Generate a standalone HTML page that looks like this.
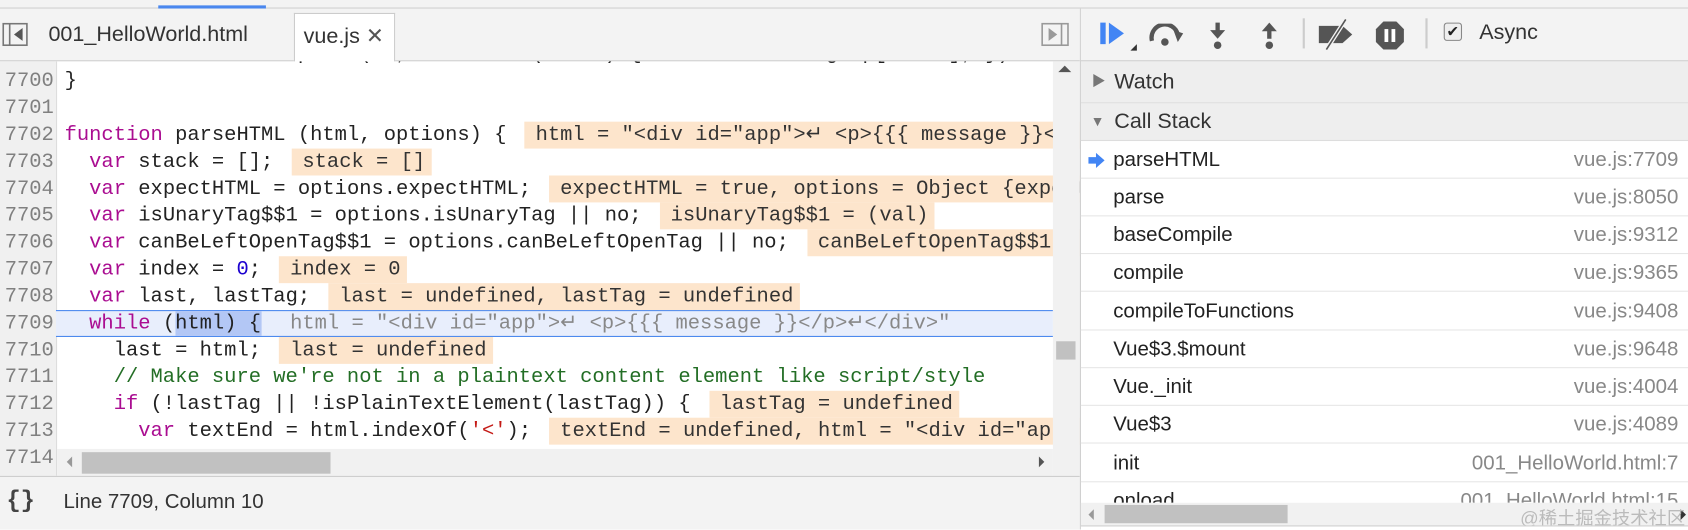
<!DOCTYPE html>
<html><head><meta charset="utf-8"><style>
*{margin:0;padding:0;box-sizing:border-box}
body{width:1688px;height:529px;overflow:hidden;background:#fff;font-family:"Liberation Sans","Noto Sans CJK SC",sans-serif;position:relative}
#wrap{position:absolute;left:0;top:0;width:1568px;height:492px;transform:scale(1.0766);transform-origin:0 0;overflow:hidden}
.abs{position:absolute}
#top{left:0;top:0;width:1568px;height:8px;background:#f3f3f3;border-bottom:1px solid #ccc}
#tabs{left:0;top:8px;width:1003px;height:49px;background:#f3f3f3;border-bottom:1px solid #ccc}
.tab{position:absolute;top:0;height:49px;line-height:48px;font-size:20px;color:#333}
#code{left:0;top:57px;width:1003px;height:385px;overflow:hidden;background:#fff}
#gutter{left:0;top:0;width:53px;height:385px;background:#f0f0f0;border-right:1px solid #ddd}
.ln{position:absolute;left:0;width:50px;text-align:right;font:19px/25px "Liberation Mono",monospace;color:#808080;height:25px}
.cl{position:absolute;left:60px;white-space:pre;font:19px/25px "Liberation Mono",monospace;color:#222;height:25px}
.k{color:#aa0d91}.n{color:#1c00cf}.s{color:#c41a16}.c{color:#236e25}
.v{background:#fde5cc;color:#333;margin-left:17px;padding:0 6px 0 10px;display:inline-block;height:25px}
.g{color:#888;margin-left:17px;padding-left:10px}
#status{left:0;top:442px;width:1003px;height:50px;background:#f3f3f3;border-top:1px solid #ccc}
#right{left:1003px;top:8px;width:565px;height:484px;background:#fff;border-left:1px solid #ccc}
#tb{left:0;top:0;width:565px;height:49px;background:#f3f3f3;border-bottom:1px solid #ccc}
.sec{position:absolute;left:0;width:565px;background:#eee;border-bottom:1px solid #ddd;font-size:20px;color:#333}
.row{position:absolute;left:0;width:565px;height:35px;border-bottom:1px solid #e6e6e6;font-size:19px;line-height:35px;color:#222}
.row .f{position:absolute;left:30px}
.row .r{position:absolute;right:10px;color:#888}
</style></head><body><div id="wrap">
<div id="top" class="abs"></div>
<div class="abs" style="left:147px;top:5px;width:100px;height:3px;background:#4a87ee"></div>
<div id="tabs" class="abs">
  <svg class="abs" style="left:2px;top:13px" width="24" height="22"><rect x="1" y="1" width="22" height="20" fill="none" stroke="#777" stroke-width="1.5"/><line x1="7" y1="1" x2="7" y2="21" stroke="#777" stroke-width="1.5"/><path d="M19 5 L11 11 L19 17Z" fill="#555"/></svg>
  <div class="tab" style="left:45px">001_HelloWorld.html</div>
  <div class="tab" style="left:273px;width:94px;top:4px;height:46px;line-height:42px;background:#fff;border:1px solid #ccc;border-bottom:none;padding-left:8px">vue.js <span style="font-size:20px;color:#555">✕</span></div>
  <svg class="abs" style="left:967px;top:13px" width="26" height="22"><rect x="1" y="1" width="24" height="20" fill="none" stroke="#999" stroke-width="1.5"/><line x1="19" y1="1" x2="19" y2="21" stroke="#999" stroke-width="1.5"/><path d="M7 5 L15 11 L7 17Z" fill="#999"/></svg>
</div>
<div id="code" class="abs">
  <div id="gutter" class="abs"></div>
  <div class="abs" style="left:52px;top:231px;width:926px;height:25px;background:#e8eefc;border-top:1px solid #4a87ee;border-bottom:1px solid #4a87ee"></div>
  <div class="ln" style="top:-19px">7699</div><div class="cl" style="top:-19px">    <span class="k">return</span> value.replace(re, <span class="k">function</span> (match) { <span class="k">return</span> decodingMap[match]; })</div>
  <div class="ln" style="top:6px">7700</div><div class="cl" style="top:6px">}</div>
  <div class="ln" style="top:31px">7701</div>
  <div class="ln" style="top:56px">7702</div><div class="cl" style="top:56px"><span class="k">function</span> parseHTML (html, options) {<span class="v">html = "&lt;div id="app"&gt;↵ &lt;p&gt;{{{ message }}&lt;/p&gt;</span></div>
  <div class="ln" style="top:81px">7703</div><div class="cl" style="top:81px">  <span class="k">var</span> stack = [];<span class="v">stack = []</span></div>
  <div class="ln" style="top:106px">7704</div><div class="cl" style="top:106px">  <span class="k">var</span> expectHTML = options.expectHTML;<span class="v">expectHTML = true, options = Object {expectHTML</span></div>
  <div class="ln" style="top:131px">7705</div><div class="cl" style="top:131px">  <span class="k">var</span> isUnaryTag$$1 = options.isUnaryTag || no;<span class="v">isUnaryTag$$1 = (val)</span></div>
  <div class="ln" style="top:156px">7706</div><div class="cl" style="top:156px">  <span class="k">var</span> canBeLeftOpenTag$$1 = options.canBeLeftOpenTag || no;<span class="v">canBeLeftOpenTag$$1 = (val)</span></div>
  <div class="ln" style="top:181px">7707</div><div class="cl" style="top:181px">  <span class="k">var</span> index = <span class="n">0</span>;<span class="v">index = 0</span></div>
  <div class="ln" style="top:206px">7708</div><div class="cl" style="top:206px">  <span class="k">var</span> last, lastTag;<span class="v">last = undefined, lastTag = undefined</span></div>
  <div class="abs" style="left:163px;top:232px;width:80px;height:23px;background:#b3c7f5"></div>
  <div class="ln" style="top:231px">7709</div><div class="cl" style="top:231px">  <span class="k">while</span> (html) {<span class="g">html = "&lt;div id="app"&gt;↵ &lt;p&gt;{{{ message }}&lt;/p&gt;↵&lt;/div&gt;"</span></div>
  <div class="ln" style="top:256px">7710</div><div class="cl" style="top:256px">    last = html;<span class="v">last = undefined</span></div>
  <div class="ln" style="top:281px">7711</div><div class="cl" style="top:281px">    <span class="c">// Make sure we're not in a plaintext content element like script/style</span></div>
  <div class="ln" style="top:306px">7712</div><div class="cl" style="top:306px">    <span class="k">if</span> (!lastTag || !isPlainTextElement(lastTag)) {<span class="v">lastTag = undefined</span></div>
  <div class="ln" style="top:331px">7713</div><div class="cl" style="top:331px">      <span class="k">var</span> textEnd = html.indexOf(<span class="s">'&lt;'</span>);<span class="v">textEnd = undefined, html = "&lt;div id="app"</span></div>
  <div class="ln" style="top:356px">7714</div>
  <div class="abs" style="left:978px;top:0;width:25px;height:385px;background:#f1f1f1"></div>
  <div class="abs" style="left:983px;top:4px;width:0;height:0;border-left:6px solid transparent;border-right:6px solid transparent;border-bottom:6px solid #555"></div>
  <div class="abs" style="left:981px;top:260px;width:18px;height:17px;background:#c1c1c1"></div>
  <div class="abs" style="left:53px;top:360px;width:925px;height:25px;background:#f1f1f1"></div>
  <div class="abs" style="left:76px;top:363px;width:231px;height:20px;background:#c1c1c1"></div>
  <div class="abs" style="left:62px;top:367px;border-top:5px solid transparent;border-bottom:5px solid transparent;border-right:5px solid #999"></div>
  <div class="abs" style="left:965px;top:367px;border-top:5px solid transparent;border-bottom:5px solid transparent;border-left:5px solid #555"></div>
</div>
<div id="status" class="abs">
  <div class="abs" style="left:6px;top:10px;font:bold 22px 'Liberation Mono',monospace;color:#444">{}</div>
  <div class="abs" style="left:59px;top:13px;font-size:19px;color:#333">Line 7709, Column 10</div>
</div>
<div id="right" class="abs">
  <div id="tb" class="abs">
    <svg class="abs" style="left:16px;top:11px" width="40" height="30"><rect x="2" y="2" width="5" height="20" fill="#4285f4"/><path d="M10 2 L24 12 L10 22Z" fill="#4285f4"/><path d="M36 28 L36 22 L30 28Z" fill="#333"/></svg>
    <svg class="abs" style="left:62px;top:14px" width="36" height="22"><path d="M4 16 A12 12 0 0 1 28 10" fill="none" stroke="#555" stroke-width="4"/><path d="M24 6 L33 9 L28 17Z" fill="#555"/><circle cx="16" cy="17" r="3.5" fill="#555"/></svg>
    <svg class="abs" style="left:117px;top:12px" width="20" height="28"><rect x="8" y="1" width="4" height="9" fill="#555"/><path d="M3 8 L17 8 L10 16Z" fill="#555"/><circle cx="10" cy="22" r="3.5" fill="#555"/></svg>
    <svg class="abs" style="left:165px;top:12px" width="20" height="28"><path d="M3 9 L17 9 L10 1Z" fill="#555"/><rect x="8" y="8" width="4" height="8" fill="#555"/><circle cx="10" cy="22" r="3.5" fill="#555"/></svg>
    <div class="abs" style="left:206px;top:9px;width:2px;height:28px;background:#ccc"></div>
    <svg class="abs" style="left:219px;top:8px" width="36" height="32"><path d="M2 8 L24 8 L33 16 L24 24 L2 24Z" fill="#555"/><line x1="9" y1="30" x2="27" y2="2" stroke="#f3f3f3" stroke-width="4"/><line x1="9" y1="30" x2="27" y2="2" stroke="#555" stroke-width="1.5"/></svg>
    <svg class="abs" style="left:272px;top:10px" width="30" height="30"><path d="M9 2 L21 2 L28 9 L28 21 L21 28 L9 28 L2 21 L2 9Z" fill="#555"/><rect x="10" y="9" width="3.5" height="12" fill="#fff"/><rect x="16.5" y="9" width="3.5" height="12" fill="#fff"/></svg>
    <div class="abs" style="left:320px;top:9px;width:2px;height:28px;background:#ccc"></div>
    <div class="abs" style="left:337px;top:13px;width:17px;height:17px;border:1px solid #888;border-radius:3px;background:#eee;font-size:14px;line-height:15px;text-align:center;color:#222">✔</div>
    <div class="abs" style="left:370px;top:11px;font-size:20px;color:#333">Async</div>
  </div>
  <div class="sec" style="top:49px;height:39px;line-height:38px"><span style="position:absolute;left:10px;top:0;font-size:13px;color:#777">▶</span><span style="position:absolute;left:31px">Watch</span></div>
  <div class="sec" style="top:88px;height:35px;line-height:34px"><span style="position:absolute;left:9px;top:0;font-size:13px;color:#777">▼</span><span style="position:absolute;left:31px">Call Stack</span></div>
  <div class="row" style="top:123px"><svg class="abs" style="left:6px;top:11px" width="17" height="14"><path d="M1 4 L8 4 L8 0 L16 7 L8 14 L8 10 L1 10Z" fill="#4285f4"/></svg><span class="f">parseHTML</span><span class="r">vue.js:7709</span></div>
  <div class="row" style="top:158px"><span class="f">parse</span><span class="r">vue.js:8050</span></div>
  <div class="row" style="top:193px"><span class="f">baseCompile</span><span class="r">vue.js:9312</span></div>
  <div class="row" style="top:228px"><span class="f">compile</span><span class="r">vue.js:9365</span></div>
  <div class="row" style="top:264px"><span class="f">compileToFunctions</span><span class="r">vue.js:9408</span></div>
  <div class="row" style="top:299px"><span class="f">Vue$3.$mount</span><span class="r">vue.js:9648</span></div>
  <div class="row" style="top:334px"><span class="f">Vue._init</span><span class="r">vue.js:4004</span></div>
  <div class="row" style="top:369px"><span class="f">Vue$3</span><span class="r">vue.js:4089</span></div>
  <div class="row" style="top:405px"><span class="f">init</span><span class="r">001_HelloWorld.html:7</span></div>
  <div class="row" style="top:440px;height:19px;overflow:hidden;border:none"><span class="f">onload</span><span class="r">001_HelloWorld.html:15</span></div>
  <div class="abs" style="left:0;top:459px;width:565px;height:21px;background:#f1f1f1"></div>
  <div class="abs" style="left:22px;top:461px;width:170px;height:17px;background:#c1c1c1"></div>
  <div class="abs" style="left:7px;top:465px;border-top:5px solid transparent;border-bottom:5px solid transparent;border-right:5px solid #999"></div>
  <div class="abs" style="left:557px;top:465px;border-top:5px solid transparent;border-bottom:5px solid transparent;border-left:5px solid #333"></div>
  <div class="abs" style="left:408px;top:459px;font-size:17px;color:#bbb">@稀土掘金技术社区</div>
  <div class="abs" style="left:0;top:480px;width:565px;height:4px;background:#fff;border-top:1px solid #ccc"></div>
</div>
</div></body></html>
